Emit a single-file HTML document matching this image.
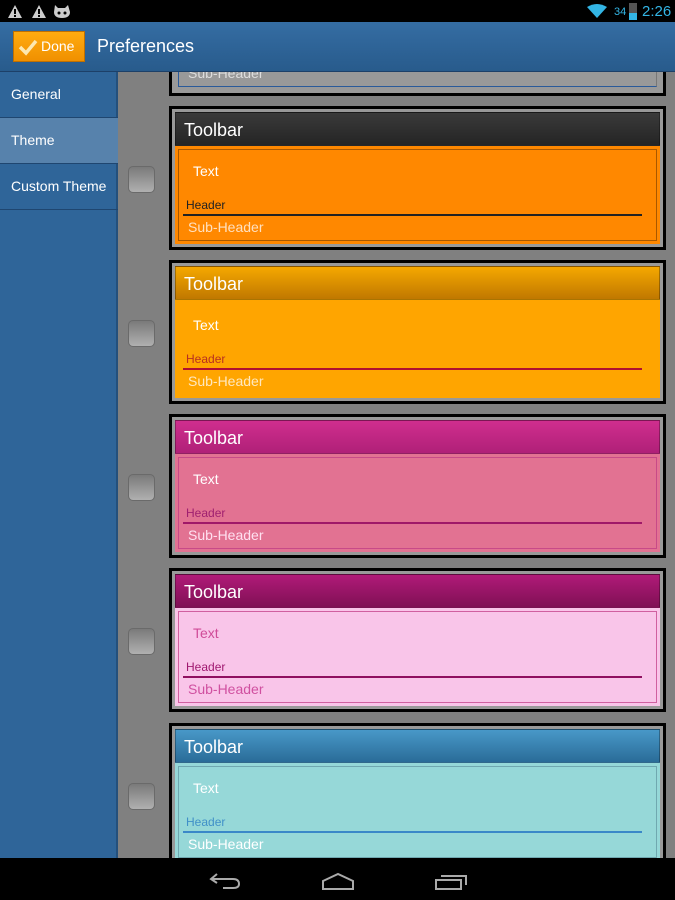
<!DOCTYPE html>
<html><head><meta charset="utf-8"><style>
*{margin:0;padding:0;box-sizing:border-box}
body{width:675px;height:900px;overflow:hidden;background:#808080;font-family:"Liberation Sans",sans-serif;position:relative}
.abs{position:absolute}
#status{left:0;top:0;width:675px;height:22px;background:#000;z-index:6}
#bar{left:0;top:22px;width:675px;height:50px;background:linear-gradient(#356da3,#285b8c);border-bottom:1px solid #1d4068;z-index:5}
#done{left:13px;top:9px;width:72px;height:31px;background:linear-gradient(#ffab10,#f09000);border:1px solid #c07000;color:#fff;font-size:14px;line-height:29px;padding-left:27px}
#title{left:97px;top:14px;color:#fff;font-size:18px}
#side{left:0;top:72px;width:118px;height:786px;background:#2f6599;border-right:2px solid #24507c}
.item{position:absolute;left:0;width:118px;height:46px;border-bottom:1px solid #1f4670;color:#fff;font-size:14px;line-height:44px;padding-left:11px}
#nav{left:0;top:858px;width:675px;height:42px;background:#000;z-index:6}
.card{position:absolute;left:169px;width:497px;height:144px;border:3px solid #000;background:#999;padding:3px}
.tb{height:34px;font-size:18px;color:#fff;line-height:34px;padding-left:8px;border:1px solid rgba(0,0,0,.3)}
.bd{position:relative;height:98px}
.box{position:absolute;left:3px;top:3px;right:3px;bottom:3px;border:1px solid}
.t{position:absolute;left:18px;top:17px;font-size:14px}
.h{position:absolute;left:11px;top:52px;font-size:12px}
.ln{position:absolute;left:8px;width:459px;top:68px;height:2px}
.s{position:absolute;left:13px;top:73px;font-size:14px}
.cb{position:absolute;left:128px;width:27px;height:27px;border-radius:5px;background:linear-gradient(#7a7a7a,#b0b0b0);border:1px solid #6a6a6a}
</style></head><body>
<div class="abs" id="status">
<svg class="abs" style="left:8px;top:4px" width="64" height="15"><path d="M7 1L14 14H0Z" fill="#ccc"/><rect x="6" y="5" width="2" height="5" fill="#000"/><rect x="6" y="11" width="2" height="2" fill="#000"/><path d="M31 1L38 14H24Z" fill="#ccc"/><rect x="30" y="5" width="2" height="5" fill="#000"/><rect x="30" y="11" width="2" height="2" fill="#000"/><path d="M47 1L50 4H57L60 1 62 8Q62 14 54 14 46 14 46 8Z" fill="#ccc"/><circle cx="51" cy="9" r="1.5" fill="#000"/><circle cx="57" cy="9" r="1.5" fill="#000"/></svg>
<svg class="abs" style="left:587px;top:4px" width="20" height="14"><path d="M0 3Q10 -3 20 3L10 14Z" fill="#33b5e5"/></svg>
<span class="abs" style="left:614px;top:6px;color:#33b5e5;font-size:11px">34</span>
<div class="abs" style="left:629px;top:3px;width:8px;height:17px;background:#555"></div><div class="abs" style="left:629px;top:13px;width:8px;height:7px;background:#33b5e5"></div>
<span class="abs" style="left:642px;top:3px;color:#33b5e5;font-size:15px">2:26</span>
</div>

<div id="cont">
<div class="card" style="top:-48px"><div class="tb" style="background:#555"></div><div class="bd" style="background:#999"><div class="box" style="border-color:#777;border-bottom-color:#2a5a9a;border-left-color:#2a5a9a"></div><div class="s" style="color:#ddd">Sub-Header</div></div></div>

<div class="card" style="top:106px"><div class="tb" style="background:linear-gradient(#3a3a3a,#252525)">Toolbar</div><div class="bd" style="background:#ff8800"><div class="box" style="border-color:#a85800"></div><div class="t" style="color:#fff">Text</div><div class="h" style="color:#222">Header</div><div class="ln" style="background:#222"></div><div class="s" style="color:#ffe0c0">Sub-Header</div></div></div>
<div class="cb" style="top:166px"></div>

<div class="card" style="top:260px"><div class="tb" style="background:linear-gradient(#f5a800,#c07800)">Toolbar</div><div class="bd" style="background:#ffa500"><div class="t" style="color:#fff">Text</div><div class="h" style="color:#b83020">Header</div><div class="ln" style="background:#b01030"></div><div class="s" style="color:#ffe8c0">Sub-Header</div></div></div>
<div class="cb" style="top:320px"></div>

<div class="card" style="top:414px"><div class="tb" style="background:linear-gradient(#d02e8e,#b02078)">Toolbar</div><div class="bd" style="background:#e27292"><div class="box" style="border-color:#c84a88"></div><div class="t" style="color:#fff">Text</div><div class="h" style="color:#a02070">Header</div><div class="ln" style="background:#a01868"></div><div class="s" style="color:#ffe0f0">Sub-Header</div></div></div>
<div class="cb" style="top:474px"></div>

<div class="card" style="top:568px"><div class="tb" style="background:linear-gradient(#b01a78,#801055)">Toolbar</div><div class="bd" style="background:#f9c5e9"><div class="box" style="border-color:#d060a0"></div><div class="t" style="color:#d04c98">Text</div><div class="h" style="color:#a01870">Header</div><div class="ln" style="background:#901060"></div><div class="s" style="color:#d050a0">Sub-Header</div></div></div>
<div class="cb" style="top:628px"></div>

<div class="card" style="top:723px"><div class="tb" style="background:linear-gradient(#4898c8,#2a6c98)">Toolbar</div><div class="bd" style="background:#96d8d8"><div class="box" style="border-color:#70a8b0"></div><div class="t" style="color:#fff">Text</div><div class="h" style="color:#4090c8">Header</div><div class="ln" style="background:#3a88c8"></div><div class="s" style="color:#fff">Sub-Header</div></div></div>
<div class="cb" style="top:783px"></div>
</div>

<div class="abs" id="side">
<div class="item" style="top:0">General</div>
<div class="item" style="top:46px;background:#5782ac">Theme</div>
<div class="item" style="top:92px">Custom Theme</div>
</div>

<div class="abs" id="bar">
<div class="abs" id="done"><svg class="abs" style="left:4px;top:6px" width="20" height="18"><path d="M2 9L8 15L18 3" stroke="#fde8b0" stroke-width="3.5" fill="none"/></svg>Done</div>
<div class="abs" id="title">Preferences</div>
</div>

<div class="abs" id="nav">
<svg class="abs" style="left:205px;top:12px" width="270" height="22" fill="none" stroke="#aaa" stroke-width="2">
<path d="M12 4L6 9 12 13M6 9H28Q34 9 34 14 34 18 28 18H18"/>
<path d="M118 11L133 4 148 11V19H118Z"/>
<path d="M231 10H256V19H231ZM236 6H261V15"/>
</svg>
</div>
</body></html>
